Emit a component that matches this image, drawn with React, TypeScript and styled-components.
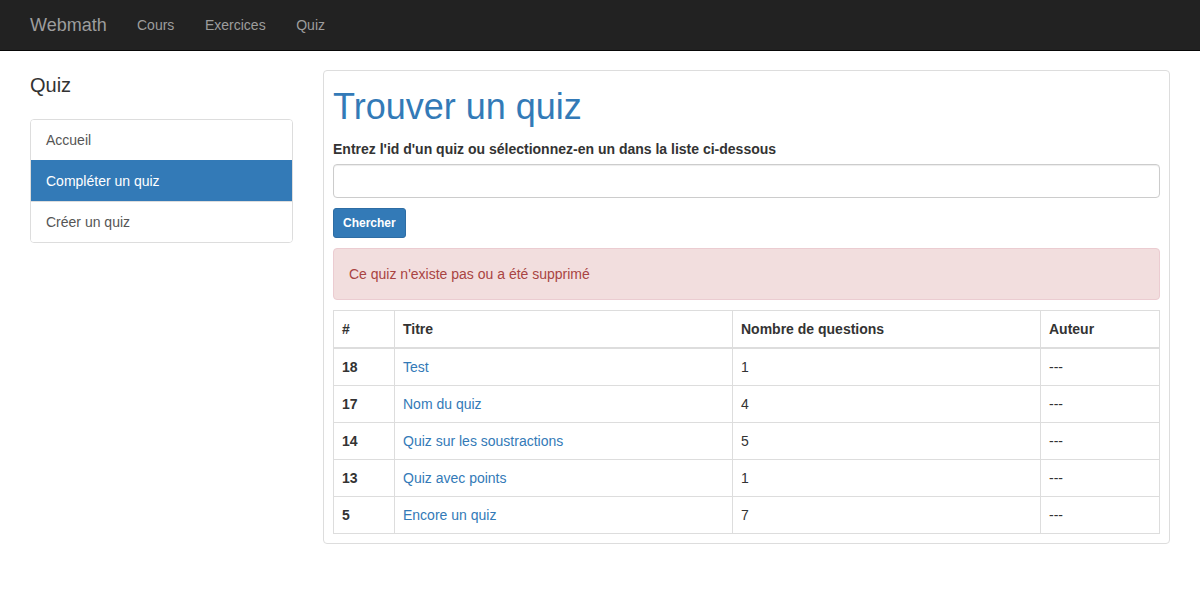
import React from "react";
import styled, { createGlobalStyle } from "styled-components";

const GlobalStyle = createGlobalStyle`
  html, body { margin: 0; padding: 0; background: #fff; }
  body {
    font-family: "Liberation Sans", Arial, Helvetica, sans-serif;
    font-size: 14px;
    line-height: 1.42857143;
    color: #333;
  }
  * { box-sizing: border-box; }
`;

const Navbar = styled.nav`
  height: 51px;
  background: #222;
  border-bottom: 1px solid #080808;
`;

const NavInner = styled.div`
  width: 1170px;
  margin: 0 auto;
  padding: 0 15px;
  display: flex;
  align-items: center;
  height: 50px;
`;

const Brand = styled.a`
  font-size: 18px;
  line-height: 20px;
  padding: 15px 15px 15px 0;
  color: #9d9d9d;
  text-decoration: none;
`;

const NavLink = styled.a`
  font-size: 14px;
  line-height: 20px;
  padding: 15px 15.3px;
  color: #9d9d9d;
  text-decoration: none;
`;

const Container = styled.div`
  width: 1170px;
  margin: 0 auto;
  padding: 19px 15px 0;
  display: grid;
  grid-template-columns: 262.5px 847px;
  column-gap: 30.5px;
  align-items: start;
`;

const SideTitle = styled.h3`
  font-size: 20px;
  font-weight: 500;
  line-height: 22px;
  margin: 4px 0 23px;
  color: #333;
`;

const ListGroup = styled.div`
  border: 1px solid #ddd;
  border-radius: 4px;
  overflow: hidden;
`;

const ListItem = styled.a<{ $active?: boolean }>`
  display: block;
  padding: 10px 15px;
  line-height: 20px;
  color: ${(p) => (p.$active ? "#fff" : "#555")};
  background: ${(p) => (p.$active ? "#337ab7" : "#fff")};
  text-decoration: none;
  border-top: 1px solid ${(p) => (p.$active ? "#337ab7" : "#ddd")};
  &:first-child { border-top: 0; }
`;

const Panel = styled.div`
  border: 1px solid #ddd;
  border-radius: 4px;
  padding: 9px;
  background: #fff;
`;

const Title = styled.h1`
  font-size: 36px;
  font-weight: 500;
  line-height: 1.1;
  color: #337ab7;
  margin: 7px 0 12px;
`;

const Label = styled.label`
  display: block;
  font-weight: bold;
  margin-bottom: 5px;
`;

const Input = styled.input`
  display: block;
  width: 100%;
  height: 34px;
  padding: 6px 12px;
  font-size: 14px;
  border: 1px solid #ccc;
  border-radius: 4px;
  box-shadow: inset 0 1px 1px rgba(0, 0, 0, 0.075);
  font-family: inherit;
  margin-bottom: 10px;
`;

const Button = styled.button`
  display: block;
  padding: 5px 9px;
  font-size: 12px;
  line-height: 1.5;
  font-weight: bold;
  font-family: inherit;
  color: #fff;
  background: #337ab7;
  border: 1px solid #2e6da4;
  border-radius: 3px;
  margin-bottom: 10px;
  height: 30px;
`;

const Alert = styled.div`
  padding: 15px;
  border: 1px solid #ebccd1;
  background: #f2dede;
  color: #a94442;
  border-radius: 4px;
  margin-bottom: 10px;
`;

const Table = styled.table`
  width: 100%;
  border-collapse: collapse;
  border-spacing: 0;
  border: 1px solid #ddd;
  margin: 0;
`;

const Th = styled.th<{ $w?: number }>`
  text-align: left;
  padding: 8px;
  line-height: 20px;
  border: 1px solid #ddd;
  vertical-align: bottom;
  width: ${(p) => (p.$w ? `${p.$w}px` : "auto")};
`;

const HeadTh = styled(Th)`
  border-bottom-width: 2px;
`;

const Td = styled.td`
  padding: 8px;
  line-height: 20px;
  border: 1px solid #ddd;
`;

const Link = styled.a`
  color: #337ab7;
  text-decoration: none;
`;

const rows = [
  { id: 18, title: "Test", n: 1 },
  { id: 17, title: "Nom du quiz", n: 4 },
  { id: 14, title: "Quiz sur les soustractions", n: 5 },
  { id: 13, title: "Quiz avec points", n: 1 },
  { id: 5, title: "Encore un quiz", n: 7 },
];

export default function App() {
  return (
    <>
      <GlobalStyle />
      <Navbar>
        <NavInner>
          <Brand href="#">Webmath</Brand>
          <NavLink href="#">Cours</NavLink>
          <NavLink href="#">Exercices</NavLink>
          <NavLink href="#">Quiz</NavLink>
        </NavInner>
      </Navbar>
      <Container>
        <aside>
          <SideTitle>Quiz</SideTitle>
          <ListGroup>
            <ListItem href="#">Accueil</ListItem>
            <ListItem href="#" $active>
              Compléter un quiz
            </ListItem>
            <ListItem href="#">Créer un quiz</ListItem>
          </ListGroup>
        </aside>
        <Panel>
          <Title>Trouver un quiz</Title>
          <Label>Entrez l'id d'un quiz ou sélectionnez-en un dans la liste ci-dessous</Label>
          <Input type="text" />
          <Button>Chercher</Button>
          <Alert>Ce quiz n'existe pas ou a été supprimé</Alert>
          <Table>
            <thead>
              <tr>
                <HeadTh $w={61}>#</HeadTh>
                <HeadTh $w={338}>Titre</HeadTh>
                <HeadTh $w={308}>Nombre de questions</HeadTh>
                <HeadTh>Auteur</HeadTh>
              </tr>
            </thead>
            <tbody>
              {rows.map((r) => (
                <tr key={r.id}>
                  <Th>{r.id}</Th>
                  <Td>
                    <Link href="#">{r.title}</Link>
                  </Td>
                  <Td>{r.n}</Td>
                  <Td>---</Td>
                </tr>
              ))}
            </tbody>
          </Table>
        </Panel>
      </Container>
    </>
  );
}
